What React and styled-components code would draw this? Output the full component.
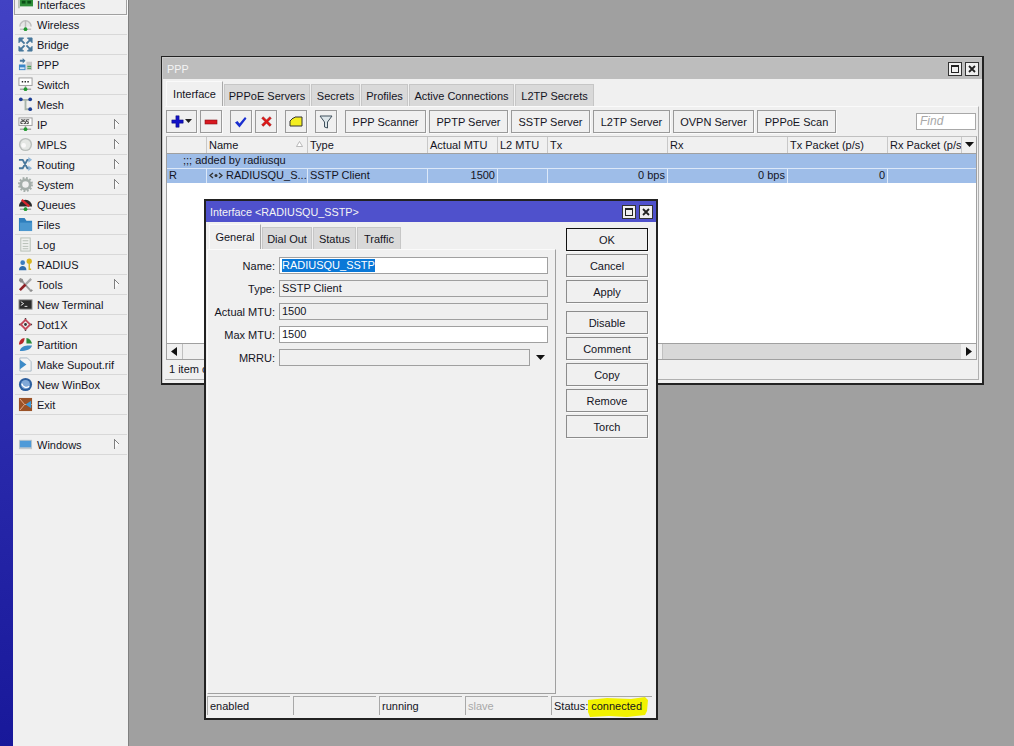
import React from "react";
import styled, { createGlobalStyle } from "styled-components";

const Global = createGlobalStyle`
  html, body { margin: 0; padding: 0; height: 100%; overflow: hidden; }
  * { box-sizing: border-box; }
  #root { height: 746px; }
`;

const FONT = `"Liberation Sans", Arial, sans-serif`;
const INK = "#14141e";

const Screen = styled.div`
  display: flex;
  width: 1014px;
  height: 746px;
  overflow: hidden;
  background: #a0a0a0;
  font-family: ${FONT};
  font-size: 11px;
  color: ${INK};
`;
const BlueStrip = styled.div`
  width: 13px;
  background: linear-gradient(#4242c4, #18189a);
`;
const Sidebar = styled.nav`
  width: 116px;
  height: 746px;
  background: #f0f0f0;
  border-right: 1px solid #808080;
  padding: 0 1px 0 1px;
  display: flex;
  flex-direction: column;
  overflow: hidden;
`;
const MenuRow = styled.div`
  flex: none;
  display: flex;
  align-items: center;
  height: 20px;
  gap: 4px;
  padding-left: 3px;
  margin-left: 1px;
  border-bottom: 1px solid #d8d8d8;
  position: relative;
  ${(p) => p.$selected && `
    margin-top: -5px;
    margin-left: 0;
    border: 1px solid #a0a0a0;
    border-top: none;
    padding-left: 3px;
    box-shadow: 1px 1px 0 #fafafa;
  `}
`;
const MenuIcon = styled.svg`
  width: 15px;
  height: 15px;
  flex: none;
`;
const MenuLabel = styled.span`
  white-space: nowrap;
`;
const Chevron = styled.svg`
  position: absolute;
  left: 99px;
  top: 4px;
  width: 6px;
  height: 10px;
`;

const Win = styled.section`
  position: absolute;
  left: ${(p) => p.$x}px;
  top: ${(p) => p.$y}px;
  width: ${(p) => p.$w}px;
  height: ${(p) => p.$h}px;
  background: #f0f0f0;
  border: 2px solid #222;
  display: flex;
  flex-direction: column;
  ${(p) => p.$rim && `
    border-width: 1px 2px 2px 1px;
    padding: 1px 0 0 1px;
    box-shadow: inset 1px 1px 0 #cacaca;
  `}
`;
const TitleBar = styled.header`
  flex: none;
  height: ${(p) => p.$h}px;
  background: ${(p) => p.$bg};
  color: ${(p) => p.$fg};
  display: flex;
  align-items: center;
  justify-content: space-between;
  padding: 0 3px 0 4px;
  font-size: 10.8px;
`;
const WinBtns = styled.div`
  display: flex;
  gap: 3px;
`;
const WinBtn = styled.div`
  width: 14px;
  height: 14px;
  background: #efefef;
  border: 1px solid #333;
  display: flex;
  align-items: center;
  justify-content: center;
  svg { width: 10px; height: 10px; display: block; }
`;

const TabRow = styled.div`
  flex: none;
  display: flex;
  align-items: flex-end;
  gap: 1px;
  height: ${(p) => p.$h}px;
  padding-left: ${(p) => p.$pad}px;
`;
const Tab = styled.div`
  height: ${(p) => (p.$active ? 25 : 22)}px;
  width: ${(p) => p.$w}px;
  display: flex;
  align-items: center;
  justify-content: center;
  white-space: nowrap;
  background: ${(p) => (p.$active ? "#f0f0f0" : "#d9d9d9")};
  border: 1px solid #c6c6c6;
  border-bottom: none;
  ${(p) => p.$active && "border-color: #fafafa #a8a8a8 transparent #fafafa; padding-bottom: 1px;"}
`;

const PppBody = styled.div`
  flex: 1;
  margin: 0 3px 3px 2px;
  padding: 0 1px;
  border: 1px solid transparent;
  border-top-color: #fafafa;
  border-right-color: #b0b0b0;
  border-bottom-color: #b0b0b0;
  border-left: none;
  display: flex;
  flex-direction: column;
  min-height: 0;
`;
const Toolbar = styled.div`
  flex: none;
  height: 29px;
  display: flex;
  align-items: flex-start;
  gap: 3px;
  padding-top: 3px;
`;
const ToolBtn = styled.button`
  height: 23px;
  width: ${(p) => p.$w}px;
  margin-left: ${(p) => p.$ml || 0}px;
  flex: none;
  padding: 0;
  font: inherit;
  color: inherit;
  background: #f0f0f0;
  border: 1px solid #9a9a9a;
  box-shadow: 1px 1px 0 #fafafa;
  display: flex;
  align-items: center;
  justify-content: center;
  gap: 1px;
`;
const ToolIcon = styled.svg`
  width: ${(p) => p.$s || 16}px;
  height: ${(p) => p.$s || 16}px;
  display: block;
`;
const Find = styled.div`
  margin-left: auto;
  margin-top: 3px;
  margin-right: 1px;
  width: 60px;
  height: 17px;
  background: #fff;
  border: 1px solid #a8a8a8;
  color: #a8a8a8;
  font-style: italic;
  padding-left: 3px;
  line-height: 15px;
  font-size: 12px;
`;
const Table = styled.div`
  flex: none;
  height: 224px;
  border: 1px solid #a0a0a0;
  border-top-color: #c0c0c0;
  background: #fff;
  display: flex;
  flex-direction: column;
  overflow: hidden;
`;
const Cols = "40px 101px 120px 70px 50px 120px 120px 100px";
const HeadRow = styled.div`
  flex: none;
  display: grid;
  grid-template-columns: ${Cols} 74px 15px;
  height: 17px;
  background: #f0f0f0;
  border-bottom: 1px solid #a0a0a0;
`;
const HeadCell = styled.div`
  border-right: 1px solid #c8c8c8;
  padding-left: 2px;
  line-height: 17px;
  white-space: nowrap;
  overflow: hidden;
  position: relative;
`;
const SortMark = styled.svg`
  position: absolute;
  right: 4px;
  top: 4px;
  width: 7px;
  height: 6px;
`;
const ColMenu = styled.div`
  display: flex;
  align-items: center;
  justify-content: center;
`;
const CommentRow = styled.div`
  flex: none;
  height: 15px;
  background: #9ebde8;
  padding-left: 16px;
  line-height: 13px;
  border-bottom: 1px solid #dce8f8;
`;
const DataRow = styled.div`
  flex: none;
  display: grid;
  grid-template-columns: ${Cols} 1fr;
  height: 14px;
  background: #9ebde8;
`;
const DataCell = styled.div`
  border-right: ${(p) => (p.$last ? "none" : "1px solid #dce8f8")};
  padding: 0 2px 1px;
  line-height: 13px;
  white-space: nowrap;
  overflow: hidden;
  display: flex;
  gap: 3px;
  align-items: center;
  justify-content: ${(p) => (p.$right ? "flex-end" : "flex-start")};
`;
const TableFill = styled.div`
  flex: 1;
`;
const Scrollbar = styled.div`
  flex: none;
  height: 16px;
  display: flex;
  background: #d8d8d8;
  border-top: 1px solid #a0a0a0;
`;
const ScrollArrow = styled.div`
  width: 15px;
  background: #f0f0f0;
  display: flex;
  align-items: center;
  justify-content: center;
  svg { width: 7px; height: 9px; }
`;
const ScrollThumb = styled.div`
  width: 481px;
  background: #f0f0f0;
  border-right: 1px solid #c0c0c0;
  border-left: 1px solid #c0c0c0;
`;
const ScrollTrack = styled.div`
  flex: 1;
`;
const ItemCount = styled.div`
  flex: 1;
  padding-left: 3px;
  line-height: 18px;
`;

const DialogBody = styled.div`
  flex: 1;
  display: flex;
  flex-direction: column;
  min-height: 0;
  padding-left: 1px;
`;
const DialogMain = styled.div`
  flex: none;
  display: flex;
`;
const LeftCol = styled.div`
  width: 349px;
  flex: none;
  display: flex;
  flex-direction: column;
`;
const Panel = styled.div`
  height: 445px;
  border-right: 1px solid #a0a0a0;
  border-bottom: 1px solid #a0a0a0;
  border-left: 1px solid #fafafa;
  border-top: 1px solid #fafafa;
  padding-top: 7px;
  display: flex;
  flex-direction: column;
  gap: 6px;
`;
const FieldRow = styled.div`
  display: flex;
  align-items: center;
  height: 17px;
`;
const FieldLabel = styled.label`
  width: 67px;
  text-align: right;
  white-space: nowrap;
  flex: none;
  margin-right: 4px;
`;
const FieldBox = styled.div`
  width: ${(p) => p.$w}px;
  height: 17px;
  flex: none;
  border: 1px solid #a0a0a0;
  background: ${(p) => (p.$white ? "#fff" : "#f0f0f0")};
  padding-left: 2px;
  line-height: 15px;
  white-space: nowrap;
`;
const Selected = styled.span`
  background: #0a78d7;
  color: #fff;
  display: inline-block;
  height: 13px;
  margin-top: 1px;
  line-height: 13px;
  vertical-align: top;
`;
const DropArrow = styled.svg`
  width: 9px;
  height: 5px;
  margin-left: 6px;
`;
const StatusBar = styled.div`
  display: flex;
  gap: 3px;
  margin-top: 2px;
`;
const StatusCell = styled.div`
  width: ${(p) => p.$w}px;
  height: 19px;
  border-top: 1px solid #a8a8a8;
  border-left: 1px solid #a8a8a8;
  padding-left: 2px;
  line-height: 18px;
  color: ${(p) => (p.$muted ? "#a8a8a8" : "inherit")};
  white-space: nowrap;
  position: relative;
`;
const Mark = styled.svg`
  position: absolute;
  left: 35px;
  top: 0;
  width: 62px;
  height: 21px;
`;
const MarkedText = styled.span`
  position: relative;
  margin-left: 3px;
`;
const ButtonCol = styled.div`
  flex: none;
  margin-left: 10px;
  width: 82px;
  padding-top: 6px;
  display: flex;
  flex-direction: column;
  gap: 3px;
`;
const ActionBtn = styled.button`
  flex: none;
  height: 23px;
  width: 82px;
  padding: 0;
  font: inherit;
  color: inherit;
  background: #f0f0f0;
  border: 1px solid ${(p) => (p.$primary ? "#111" : "#8c8c8c")};
  box-shadow: 1px 1px 0 #fafafa;
  margin-top: ${(p) => p.$gap || 0}px;
`;

const I = ({ children }) => <MenuIcon viewBox="0 0 16 16">{children}</MenuIcon>;

const icons = {
  Interfaces: <><rect x="2" y="1" width="14" height="9" fill="#2f8f3a" /><rect x="4" y="4" width="4" height="3" fill="#0b4f16" /><rect x="10" y="4" width="4" height="3" fill="#0b4f16" /><path d="M1 1v11" stroke="#b9c4b9" strokeWidth="2" /></>,
  Wireless: <><path d="M2 10a6 6 0 1 1 12 0" fill="#e6e6e6" stroke="#bdbdbd" strokeWidth="1.500" /><path d="M8 4v9" stroke="#bbb" strokeWidth="1.500" /><path d="M2 13h12" stroke="#a9a9a9" /><circle cx="8" cy="13" r="2" fill="#1f9a2e" /></>,
  Bridge: <g fill="#47779c" stroke="#47779c"><path d="M1 1h5L1 6z" /><path d="M15 1h-5l5 5z" /><path d="M1 15h5l-5-5z" /><path d="M15 15h-5l5-5z" /><path d="M3 3l4 4M13 3L9 7M3 13l4-4M13 13L9 9" strokeWidth="2" /></g>,
  PPP: <><path d="M2 3h3V1l3 3-3 3V5H2z" fill="#47779c" /><rect x="1" y="8" width="7" height="6" fill="#3b86c8" /><rect x="2" y="11" width="5" height="2" fill="#cfe3f5" /><rect x="9" y="5" width="6" height="9" fill="#c8c8c8" /><path d="M10 10h4M10 12h4" stroke="#2f9a40" /></>,
  Switch: <><rect x="1" y="1" width="14" height="8" fill="#fff" stroke="#9a9a9a" /><path d="M4 5h1.500M7 5h1.500M10 5h1.500" stroke="#222" strokeWidth="1.500" /><path d="M8 9v4M2 13h12" stroke="#a9a9a9" strokeWidth="1.500" /><circle cx="8" cy="13" r="2" fill="#1f9a2e" /></>,
  Mesh: <><path d="M3 3h10M8 3v10h5" fill="none" stroke="#a9b5a9" strokeWidth="2" /><circle cx="3" cy="2.500" r="2" fill="#1d3f94" /><circle cx="13" cy="2.500" r="2" fill="#1d3f94" /><circle cx="13" cy="13" r="2" fill="#1d3f94" /></>,
  IP: <><rect x="1" y="1" width="14" height="8" fill="#fff" stroke="#9a9a9a" /><path d="M3 3h2v2H3v2h2M8 3H6v2h2v2H6M12 3H9v2h2v2H9" fill="none" stroke="#111" strokeWidth=".8" /><path d="M8 9v4M2 13h12" stroke="#a9a9a9" strokeWidth="1.500" /><circle cx="8" cy="13" r="2" fill="#1f9a2e" /></>,
  MPLS: <><circle cx="8" cy="8" r="7" fill="#b9bebb" /><circle cx="8" cy="8" r="5.500" fill="#e4e7e4" /><circle cx="6" cy="9" r="2.500" fill="#fafafa" /></>,
  Routing: <><path d="M1 3h4l5 9h3M1 12h4l5-9h3" fill="none" stroke="#47779c" strokeWidth="2" /><path d="M11 0l4 3-4 3zM11 9l4 3-4 3z" fill="#8fb6d8" /></>,
  System: <><circle cx="8" cy="8" r="5" fill="none" stroke="#a5aeaa" strokeWidth="3" /><circle cx="8" cy="8" r="7" fill="none" stroke="#a5aeaa" strokeWidth="2" strokeDasharray="2 1.700" /></>,
  Queues: <><path d="M1 10a7 7 0 0 1 14 0z" fill="#2a2a2a" /><path d="M4 3l8 7" stroke="#d8262c" strokeWidth="2.500" /><path d="M8 10v3M2 13h12" stroke="#a9a9a9" strokeWidth="1.500" /><circle cx="8" cy="13" r="2" fill="#1f9a2e" /></>,
  Files: <><path d="M1 1h6l2 3h6v11H1z" fill="#2f7fbd" /><rect x="2" y="6" width="13" height="9" fill="#4b97cf" /></>,
  Log: <><rect x="3" y="1" width="10" height="14" fill="#eef0ee" stroke="#b4bdb4" /><path d="M5 4h6M5 7h6M5 10h6M5 12.500h6" stroke="#b4bdb4" /></>,
  RADIUS: <><circle cx="5" cy="6" r="2.500" fill="#3b7cc0" /><path d="M1 14c0-6 8-6 8 0z" fill="#2f6cae" /><circle cx="12" cy="4.500" r="2.800" fill="#d8b520" /><path d="M12 6v7h2" fill="none" stroke="#d8b520" strokeWidth="1.500" /></>,
  Tools: <><path d="M2 2l11 12" stroke="#9a9a9a" strokeWidth="2" /><path d="M1 4l1-3 3 1 1 3-3 1zM14 16l2-2-2-1-2 2z" fill="#8c8c8c" /><path d="M14 2L8 8" stroke="#a8a8a8" strokeWidth="2.500" /><path d="M8 8l-6 6" stroke="#8f2226" strokeWidth="2.800" /></>,
  "New Terminal": <><rect x="1" y="3" width="14" height="10" fill="#2b2b2b" stroke="#a0a0a0" /><path d="M3 5l3 2-3 2M7 10h3" fill="none" stroke="#eee" /></>,
  Dot1X: <><path d="M8 1v3M8 12v3M1 8h3M12 8h3" stroke="#383838" strokeWidth="1.500" /><path d="M8 3l5 5-5 5-5-5z" fill="none" stroke="#c44a5a" strokeWidth="2" /><circle cx="8" cy="8" r="1.500" fill="#333" /></>,
  Partition: <><path d="M1 8C1 4 4 1 7 1c0 4-2 7-6 7z" fill="#b9272b" /><path d="M9 1c3 0 5 3 6 6H9z" fill="#2a8a3a" /><path d="M2 15c0-3 4-6 8-6h5c-1 4-6 6-13 6z" fill="#3d8bc8" /></>,
  "Make Supout.rif": <><path d="M2 1h8l4 4v10H2z" fill="#f4f4f4" stroke="#a8b8c4" /><path d="M2 3l7 5-7 5z" fill="#3d8bc8" /></>,
  "New WinBox": <><circle cx="8" cy="8" r="7" fill="#2c5f9e" /><circle cx="8" cy="8" r="4.800" fill="#7fa8d8" /><path d="M4 7c1 4 5 5 8 3" fill="none" stroke="#fff" strokeWidth="1.500" /></>,
  Exit: <><rect x="1" y="1" width="14" height="14" fill="#9a5226" /><path d="M2 2l5 6-5 6M7 8h8" fill="none" stroke="#e8b090" /><path d="M14 4L8 8l6 4z" fill="#3b9ad8" /></>,
  Windows: <><rect x="1" y="3" width="14" height="10" fill="#c0c8cc" /><rect x="2" y="4" width="12" height="7" fill="#4d9ad8" /></>,
};

const menu = [
  ["Interfaces", false], ["Wireless"], ["Bridge"], ["PPP"], ["Switch"], ["Mesh"],
  ["IP", true], ["MPLS", true], ["Routing", true], ["System", true], ["Queues"], ["Files"],
  ["Log"], ["RADIUS"], ["Tools", true], ["New Terminal"], ["Dot1X"], ["Partition"],
  ["Make Supout.rif"], ["New WinBox"], ["Exit"], [""], ["Windows", true],
];

const Arrow = () => (
  <Chevron viewBox="0 0 6 10"><path d="M1 1l4 4-4 4z" fill="#fbfbfb" /><path d="M.5 0v10M.5 .5l4.500 4.500" fill="none" stroke="#808080" /></Chevron>
);

const MaxClose = () => (
  <WinBtns>
    <WinBtn><svg viewBox="0 0 10 10"><rect x="1.500" y="1.500" width="7" height="7" fill="none" stroke="#222" /><path d="M1 2.500h8" stroke="#222" /></svg></WinBtn>
    <WinBtn><svg viewBox="0 0 10 10"><path d="M2 2l6 6M8 2l-6 6" stroke="#222" strokeWidth="1.800" /></svg></WinBtn>
  </WinBtns>
);

const Tri = () => (
  <svg width="10" height="6" viewBox="0 0 10 6"><path d="M0 0h9L4.500 5z" fill="#111" /></svg>
);

export default function App() {
  return (
    <Screen>
      <Global />
      <BlueStrip />
      <Sidebar>
        {menu.map(([name, sub], i) => (
          <MenuRow key={i} $selected={i === 0}>
            {name && <I>{icons[name]}</I>}
            <MenuLabel>{name}</MenuLabel>
            {sub && <Arrow />}
          </MenuRow>
        ))}
      </Sidebar>

      <Win $rim $x={161} $y={56} $w={823} $h={329}>
        <TitleBar $h={21} $bg="#bdbdbd" $fg="#f4f4f4"><span>PPP</span><MaxClose /></TitleBar>
        <TabRow $h={27} $pad={3}>
          <Tab $active $w={57}>Interface</Tab>
          <Tab $w={86}>PPPoE Servers</Tab>
          <Tab $w={49}>Secrets</Tab>
          <Tab $w={47}>Profiles</Tab>
          <Tab $w={105}>Active Connections</Tab>
          <Tab $w={79}>L2TP Secrets</Tab>
        </TabRow>
        <PppBody>
          <Toolbar>
            <ToolBtn $w={31}>
              <ToolIcon $s={13} viewBox="0 0 16 16"><path d="M6 1h4v5h5v4h-5v5H6v-5H1V6h5z" fill="#1212c8" stroke="#0a0a70" strokeWidth=".6" /></ToolIcon>
              <svg width="8" height="5" viewBox="0 0 8 5"><path d="M0 0h7L3.500 4z" fill="#222" /></svg>
            </ToolBtn>
            <ToolBtn $w={22}><ToolIcon viewBox="0 0 16 16"><rect x="2" y="6" width="12" height="4" fill="#d81820" stroke="#8a1014" strokeWidth=".6" /></ToolIcon></ToolBtn>
            <ToolBtn $w={22} $ml={5}><ToolIcon viewBox="0 0 16 16"><path d="M2 8.500l2.500-1.500 2 2.500 5.500-6.500 1.500 1.500-7 9z" fill="#1a2fd0" /></ToolIcon></ToolBtn>
            <ToolBtn $w={22}><ToolIcon $s={13} viewBox="0 0 16 16"><path d="M2 4l2-2 4 4 4-4 2 2-4 4 4 4-2 2-4-4-4 4-2-2 4-4z" fill="#e01818" stroke="#7a0c0c" strokeWidth=".5" /></ToolIcon></ToolBtn>
            <ToolBtn $w={22} $ml={5}><ToolIcon viewBox="0 0 16 16"><path d="M2 7l3-3h1l1-1h7v9H2z" fill="#f4ee20" stroke="#333" /></ToolIcon></ToolBtn>
            <ToolBtn $w={22} $ml={5}><ToolIcon viewBox="0 0 16 16"><path d="M2 2h12L9.500 8v6l-3-1V8z" fill="#dde6ea" stroke="#40505c" /></ToolIcon></ToolBtn>
            <ToolBtn $w={81} $ml={5}>PPP Scanner</ToolBtn>
            <ToolBtn $w={79}>PPTP Server</ToolBtn>
            <ToolBtn $w={79}>SSTP Server</ToolBtn>
            <ToolBtn $w={77}>L2TP Server</ToolBtn>
            <ToolBtn $w={81}>OVPN Server</ToolBtn>
            <ToolBtn $w={79}>PPPoE Scan</ToolBtn>
            <Find>Find</Find>
          </Toolbar>
          <Table>
            <HeadRow>
              <HeadCell />
              <HeadCell>Name<SortMark viewBox="0 0 7 6"><path d="M3.500 .5L6.500 5.500H.5z" fill="#fff" stroke="#aaa" strokeWidth=".8" /></SortMark></HeadCell>
              <HeadCell>Type</HeadCell>
              <HeadCell>Actual MTU</HeadCell>
              <HeadCell>L2 MTU</HeadCell>
              <HeadCell>Tx</HeadCell>
              <HeadCell>Rx</HeadCell>
              <HeadCell>Tx Packet (p/s)</HeadCell>
              <HeadCell>Rx Packet (p/s)</HeadCell>
              <ColMenu><Tri /></ColMenu>
            </HeadRow>
            <CommentRow>;;; added by radiusqu</CommentRow>
            <DataRow>
              <DataCell>R</DataCell>
              <DataCell>
                <svg width="14" height="7" viewBox="0 0 14 7" style={{ flex: "none" }}><path d="M4 1L1 3.500 4 6M10 1l3 2.500L10 6" fill="none" stroke="#333" strokeWidth="1.300" /><circle cx="7" cy="3.500" r="1.500" fill="#333" /></svg>
                RADIUSQU_S...
              </DataCell>
              <DataCell>SSTP Client</DataCell>
              <DataCell $right>1500</DataCell>
              <DataCell />
              <DataCell $right>0 bps</DataCell>
              <DataCell $right>0 bps</DataCell>
              <DataCell $right>0</DataCell>
              <DataCell $last />
            </DataRow>
            <TableFill />
            <Scrollbar>
              <ScrollArrow><svg viewBox="0 0 7 9"><path d="M6 0v9L0 4.500z" fill="#111" /></svg></ScrollArrow>
              <ScrollThumb />
              <ScrollTrack />
              <ScrollArrow><svg viewBox="0 0 7 9"><path d="M1 0v9l6-4.500z" fill="#111" /></svg></ScrollArrow>
            </Scrollbar>
          </Table>
          <ItemCount>1 item out of 1</ItemCount>
        </PppBody>
      </Win>

      <Win $x={204} $y={199} $w={454} $h={521}>
        <TitleBar $h={21} $bg="#4f51cc" $fg="#f4f4f4"><span>Interface &lt;RADIUSQU_SSTP&gt;</span><MaxClose /></TitleBar>
        <DialogBody>
          <DialogMain>
            <LeftCol>
              <TabRow $h={27} $pad={2}>
                <Tab $active $w={52}>General</Tab>
                <Tab $w={50}>Dial Out</Tab>
                <Tab $w={43}>Status</Tab>
                <Tab $w={44}>Traffic</Tab>
              </TabRow>
              <Panel>
                <FieldRow><FieldLabel>Name:</FieldLabel><FieldBox $w={269} $white><Selected>RADIUSQU_SSTP</Selected></FieldBox></FieldRow>
                <FieldRow><FieldLabel>Type:</FieldLabel><FieldBox $w={269}>SSTP Client</FieldBox></FieldRow>
                <FieldRow><FieldLabel>Actual MTU:</FieldLabel><FieldBox $w={269}>1500</FieldBox></FieldRow>
                <FieldRow><FieldLabel>Max MTU:</FieldLabel><FieldBox $w={269} $white>1500</FieldBox></FieldRow>
                <FieldRow>
                  <FieldLabel>MRRU:</FieldLabel>
                  <FieldBox $w={251} />
                  <DropArrow viewBox="0 0 9 5"><path d="M0 0h9L4.500 5z" fill="#111" /></DropArrow>
                </FieldRow>
              </Panel>
            </LeftCol>
            <ButtonCol>
              <ActionBtn $primary>OK</ActionBtn>
              <ActionBtn>Cancel</ActionBtn>
              <ActionBtn>Apply</ActionBtn>
              <ActionBtn $gap={5}>Disable</ActionBtn>
              <ActionBtn>Comment</ActionBtn>
              <ActionBtn>Copy</ActionBtn>
              <ActionBtn>Remove</ActionBtn>
              <ActionBtn>Torch</ActionBtn>
            </ButtonCol>
          </DialogMain>
          <StatusBar>
            <StatusCell $w={83}>enabled</StatusCell>
            <StatusCell $w={83} />
            <StatusCell $w={83}>running</StatusCell>
            <StatusCell $w={83} $muted>slave</StatusCell>
            <StatusCell $w={101}>
              Status:
              <Mark viewBox="0 0 62 21"><path d="M1 3L20 1 44 2 58 0 61 3 60 14 58 18 40 20 22 19 3 20 1 15z" fill="#f2f200" /></Mark>
              <MarkedText>connected</MarkedText>
            </StatusCell>
          </StatusBar>
        </DialogBody>
      </Win>
    </Screen>
  );
}
